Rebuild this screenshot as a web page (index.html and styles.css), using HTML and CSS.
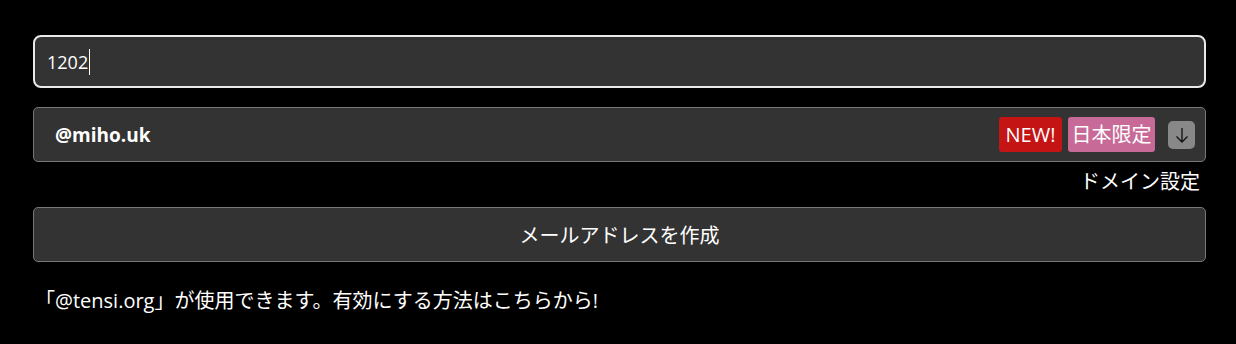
FILE: index.html
```html
<!DOCTYPE html>
<html lang="ja">
<head>
<meta charset="utf-8">
<link rel="stylesheet" href="styles.css">
</head>
<body>
<div class="wrap">
  <div class="field">
    <span class="field-text">1202</span><span class="caret"></span>
  </div>
  <div class="domain">
    <span class="domain-name">@miho.uk</span>
    <span class="badges">
      <span class="badge badge-new">NEW!</span>
      <span class="badge badge-jp">日本限定</span>
      <span class="drop">
        <svg width="16" height="18" viewBox="0 0 16 18"><path d="M8 2 V16 M2.5 10.5 L8 16 L13.5 10.5" fill="none" stroke="#111" stroke-width="1.3"/></svg>
      </span>
    </span>
  </div>
  <div class="settings">ドメイン設定</div>
  <div class="create">メールアドレスを作成</div>
  <p class="note">「@tensi.org」が使用できます。有効にする方法はこちらから!</p>
</div>
</body>
</html>
```

FILE: styles.css
```css
html, body {
  margin: 0;
  padding: 0;
  background: #000;
}
body {
  font-family: "Open Sans", "Noto Sans CJK JP", sans-serif;
  color: #fff;
}
.wrap {
  margin: 0 30px 0 33px;
  padding-top: 35px;
  display: flex;
  flex-direction: column;
}
.field {
  box-sizing: border-box;
  height: 53px;
  border: 2px solid #eaeaea;
  border-radius: 8px;
  background: #333;
  display: flex;
  align-items: center;
  padding-left: 12px;
  font-size: 18px;
}
.field-text {
  color: #fff;
}
.caret {
  display: inline-block;
  width: 1px;
  height: 26px;
  background: #fff;
  margin-left: 1px;
}
.domain {
  box-sizing: border-box;
  margin-top: 19px;
  height: 55px;
  border: 1px solid #777;
  border-radius: 5px;
  background: #333;
  display: flex;
  align-items: center;
  justify-content: space-between;
  padding: 0 10px 0 21px;
}
.domain-name {
  font-weight: 700;
  font-size: 19px;
}
.badges {
  display: flex;
  align-items: center;
}
.badge {
  height: 35px;
  line-height: 35px;
  border-radius: 3px;
  font-size: 20px;
  color: #fff;
}
.badge-new {
  background: #c41414;
  width: 63px;
  text-align: center;
}
.badge-jp {
  background: #c76a98;
  margin-left: 6px;
  width: 87px;
  text-align: center;
}
.drop {
  width: 27px;
  height: 28px;
  border-radius: 5px;
  background: #888;
  margin-left: 13px;
  display: flex;
  align-items: center;
  justify-content: center;
}
.settings {
  text-align: right;
  font-size: 20px;
  margin-top: 7px;
  padding-right: 6px;
  height: 26px;
  line-height: 26px;
}
.create {
  box-sizing: border-box;
  margin-top: 12px;
  height: 55px;
  border: 1px solid #777;
  border-radius: 5px;
  background: #333;
  display: flex;
  align-items: center;
  justify-content: center;
  font-size: 20px;
}
.note {
  margin: 26px 0 0 2px;
  font-size: 20px;
  line-height: 26px;
}
```
